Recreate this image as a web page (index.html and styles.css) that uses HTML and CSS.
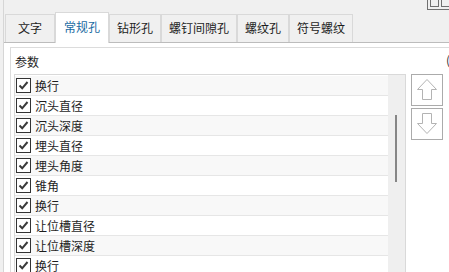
FILE: index.html
```html
<!DOCTYPE html>
<html lang="zh-CN">
<head>
    <meta charset="UTF-8">
    <meta name="viewport" content="width=device-width, initial-scale=1.0">
    <title>孔参数</title>
    <link rel="stylesheet" href="styles.css">
</head>
<body>

    <!-- Window control peeking in at the top right -->
    <svg class="corner-ctrl" width="22" height="10" viewBox="0 0 22 10">
        <rect x="0.5" y="-1" width="23" height="10.5" fill="none" stroke="#707070"/>
        <rect x="3.5" y="-1" width="8" height="7.5" fill="none" stroke="#707070"/>
        <rect x="14.5" y="-1" width="8" height="7.5" fill="none" stroke="#707070"/>
    </svg>

    <div class="frame">

        <!-- Tabs -->
        <div class="tabs">
            <div class="tab tab-first">文字</div>
            <div class="tab active">常规孔</div>
            <div class="tab">钻形孔</div>
            <div class="tab">螺钉间隙孔</div>
            <div class="tab">螺纹孔</div>
            <div class="tab">符号螺纹</div>
        </div>

        <!-- Tab page -->
        <div class="panel">
            <div class="group">
                <div class="group-title">参数</div>
                <span class="cut-label">(</span>

                <div class="group-body">
                    <div class="param-list">
                        <div class="rows" id="rows"></div>
                        <div class="scrollbar"><div class="thumb"></div></div>
                    </div>

                    <div class="move-btns">
                        <button class="move-btn" title="上移">
                            <svg width="30" height="30" viewBox="0 0 30 30">
                                <path d="M15 4.5 L24.5 14.5 L19.5 14.5 L19.5 24.5 L10.5 24.5 L10.5 14.5 L5.5 14.5 Z" fill="none" stroke="#b3b3b3"/>
                            </svg>
                        </button>
                        <button class="move-btn" title="下移">
                            <svg width="30" height="30" viewBox="0 0 30 30">
                                <path d="M10.5 4.5 L19.5 4.5 L19.5 14.5 L24.5 14.5 L15 24.5 L5.5 14.5 L10.5 14.5 Z" fill="none" stroke="#b3b3b3"/>
                            </svg>
                        </button>
                    </div>
                </div>
            </div>
        </div>
    </div>

    <script>
        // Parameter rows
        const params = ["换行", "沉头直径", "沉头深度", "埋头直径", "埋头角度", "锥角", "换行", "让位槽直径", "让位槽深度", "换行"];

        const check = '<svg width="13" height="13" viewBox="0 0 13 13"><path d="M2.5 6.5 L5.2 9.3 L10.5 3" fill="none" stroke="#3a3a3a" stroke-width="2"/></svg>';

        const rows = document.getElementById('rows');
        params.forEach(name => {
            const row = document.createElement('div');
            row.className = 'row';
            row.innerHTML = '<span class="checkbox">' + check + '</span><span class="row-text">' + name + '</span>';
            rows.appendChild(row);
        });
    </script>
</body>
</html>
```

FILE: styles.css
```css
/* Global Styles */
body {
    margin: 0;
    padding: 0;
    width: 449px;
    height: 272px;
    overflow: hidden;
    position: relative;
    background-color: #f0f0f0;
    color: #1e1e1e;
    font-family: "Microsoft YaHei", "Noto Sans CJK SC", sans-serif;
    font-size: 12px;
}

.corner-ctrl {
    position: absolute;
    top: 0;
    left: 427px;
}

.frame {
    box-sizing: border-box;
    display: flex;
    flex-direction: column;
    margin-left: 3px;
    padding-top: 14px;
    height: 272px;
    border-left: 1px solid #d6d6d6;
}

/* Tabs */
.tabs {
    display: flex;
    align-items: flex-end;
    flex-shrink: 0;
    height: 28px;
    margin-left: 1px;
}

.tab {
    box-sizing: border-box;
    height: 28px;
    padding: 0 7px;
    line-height: 26px;
    text-align: center;
    background-color: #f0f0f0;
    border: 1px solid #d9d9d9;
    border-bottom: none;
    white-space: nowrap;
}

.tab-first {
    min-width: 50px;
}

.tab.active {
    position: relative;
    z-index: 1;
    height: 31px;
    margin-bottom: -1px;
    padding: 0 8px;
    line-height: 28px;
    background-color: #fff;
    color: #1b6ca3;
}

/* Tab page */
.panel {
    flex: 1;
    display: flex;
    flex-direction: column;
    min-height: 0;
    padding: 4px 0 0 6px;
    background-color: #fff;
    border-top: 1px solid #bcbcbc;
}

.group {
    flex: 1;
    display: flex;
    flex-direction: column;
    min-height: 0;
    position: relative;
    padding: 6px 0 0 3px;
    border: 1px solid #dcdcdc;
    border-right: none;
    border-bottom: none;
}

.group-title {
    height: 16px;
    line-height: 16px;
    padding-left: 1px;
    margin-bottom: 4px;
}

.cut-label {
    position: absolute;
    top: 4px;
    left: 435px;
    color: #333;
    line-height: 16px;
}

.group-body {
    flex: 1;
    display: flex;
    align-items: flex-start;
    gap: 5px;
    min-height: 0;
}

/* Parameter list */
.param-list {
    box-sizing: border-box;
    display: flex;
    width: 392px;
    height: 100%;
    overflow: hidden;
    border: 1px solid #d9d9d9;
    border-bottom: none;
}

.rows {
    width: 373px;
    padding-top: 1px;
}

.row {
    box-sizing: border-box;
    display: flex;
    align-items: center;
    height: 20px;
    padding-left: 1px;
    border-bottom: 1px solid #e6e6e6;
    background-color: #fff;
}

.row:nth-child(odd) {
    background-color: #f8f8f8;
}

.checkbox {
    box-sizing: border-box;
    display: flex;
    align-items: center;
    justify-content: center;
    width: 15px;
    height: 15px;
    margin-right: 4px;
    background-color: #fff;
    border: 1px solid #333;
}

.row-text {
    line-height: 18px;
}

.scrollbar {
    width: 17px;
    background-color: #efefef;
    padding-top: 40px;
}

.thumb {
    width: 2px;
    height: 67px;
    margin-left: 7px;
    background-color: #868686;
}

/* Move up / down */
.move-btns {
    display: flex;
    flex-direction: column;
    gap: 2px;
}

.move-btn {
    display: flex;
    align-items: center;
    justify-content: center;
    width: 32px;
    height: 32px;
    padding: 0;
    background-color: #fff;
    border: 1px solid #ababab;
}
```
